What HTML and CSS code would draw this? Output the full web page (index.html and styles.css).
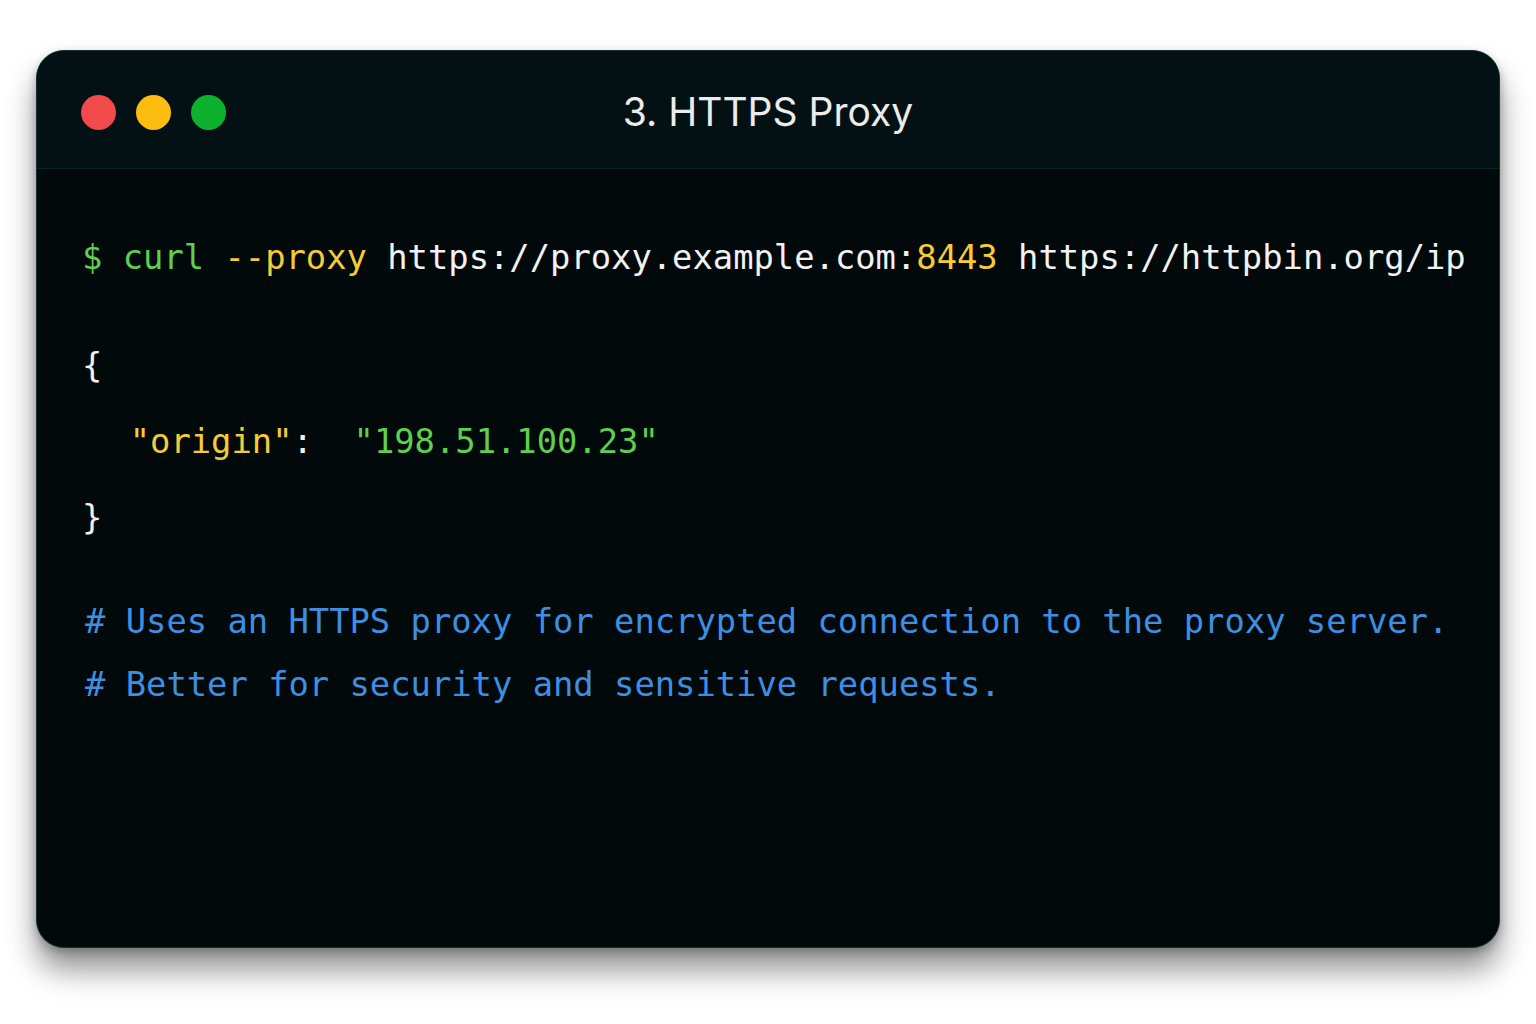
FILE: index.html
```html
<!DOCTYPE html>
<html lang="en">
<head>
<meta charset="utf-8">
<title>3. HTTPS Proxy</title>
<link rel="stylesheet" href="styles.css">
</head>
<body>
<div class="window">
  <header class="titlebar">
    <div class="dots">
      <span class="dot red"></span>
      <span class="dot yellow"></span>
      <span class="dot green"></span>
    </div>
    <div class="title">3. HTTPS Proxy</div>
    <div class="spacer"></div>
  </header>
  <main class="term">
    <div class="line"><span class="g">$ curl</span> <span class="y">--proxy</span> <span class="w">https://proxy.example.com:</span><span class="y">8443</span> <span class="w">https://httpbin.org/ip</span></div>
    <div class="json">
      <div class="jline w">{</div>
      <div class="jline indent">  <span class="y">"origin"</span><span class="w">:</span>  <span class="g">"198.51.100.23"</span></div>
      <div class="jline w">}</div>
    </div>
    <div class="comments">
      <div class="cline"># Uses an HTTPS proxy for encrypted connection to the proxy server.</div>
      <div class="cline"># Better for security and sensitive requests.</div>
    </div>
  </main>
</div>
</body>
</html>
```
FILE: styles.css
```css
html, body {
  margin: 0;
  padding: 0;
  background: #ffffff;
}

body {
  width: 1536px;
  height: 1024px;
  overflow: hidden;
  padding-top: 50px;
  padding-left: 36px;
  box-sizing: border-box;
}

.window {
  width: 1464px;
  height: 898px;
  box-sizing: border-box;
  border-radius: 28px;
  border: 1px solid #15313a;
  background: #01090b;
  box-shadow: 0 22px 30px rgba(0, 0, 0, 0.42), 0 4px 10px rgba(0, 0, 0, 0.25);
  overflow: hidden;
  display: flex;
  flex-direction: column;
}

.titlebar {
  height: 118px;
  box-sizing: border-box;
  flex: none;
  background: #041114;
  border-bottom: 1px solid #0c2328;
  display: grid;
  grid-template-columns: 1fr auto 1fr;
  align-items: center;
  padding: 6px 44px 0 44px;
}

.dots {
  display: flex;
  gap: 20px;
}

.dot {
  width: 35px;
  height: 35px;
  border-radius: 50%;
  display: block;
}

.red { background: #f24a4a; }
.yellow { background: #fcbd10; }
.green { background: #0cb22d; }

.title {
  font-family: Inter, "Noto Sans", sans-serif;
  font-size: 39px;
  color: #ececec;
  padding-bottom: 2px;
}

.term {
  flex: 1;
  padding: 69px 0 0 45px;
  font-family: "DejaVu Sans Mono", "Liberation Mono", monospace;
  font-size: 33.8px;
}

.line,
.jline,
.cline {
  white-space: pre;
}

.line {
  line-height: 40px;
  height: 40px;
}

.json {
  margin-top: 50px;
}

.jline {
  line-height: 76px;
  height: 76px;
}

.indent {
  padding-left: 7px;
}

.comments {
  margin-top: 34px;
  padding-left: 3px;
  color: #3e8fe2;
}

.cline {
  line-height: 63px;
  height: 63px;
}

.g { color: #5fd04e; }
.y { color: #f6cc35; }
.w { color: #f2f2f2; }
```
